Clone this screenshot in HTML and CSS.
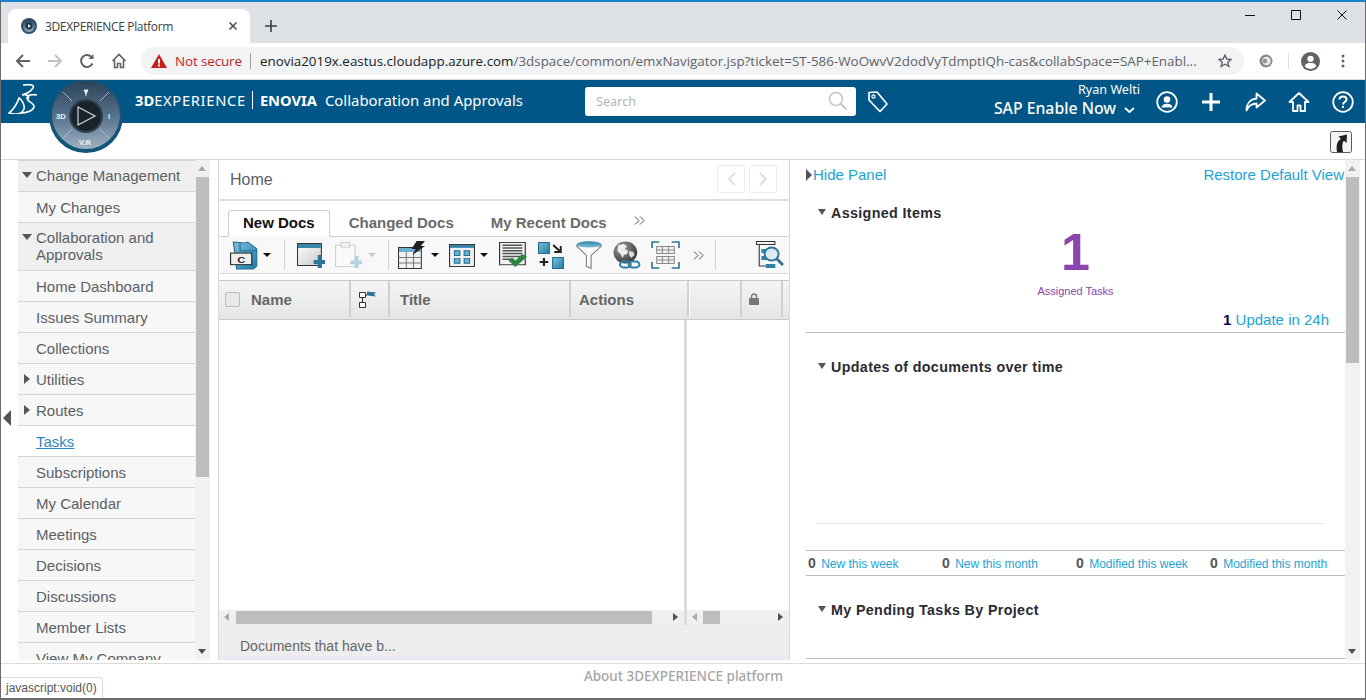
FILE: index.html
```html
<!DOCTYPE html>
<html lang="en">

<head>
    <meta charset="UTF-8">
    <meta name="viewport" content="width=device-width, initial-scale=1.0">
    <title>3DEXPERIENCE Platform</title>
    <link rel="stylesheet" href="styles.css">
</head>

<body>
    <svg class="defs" width="0" height="0">
        <defs>
            <linearGradient id="blue" x1="0" y1="0" x2="1" y2="1">
                <stop offset="0" stop-color="#7fc0dc"/>
                <stop offset="1" stop-color="#1f7ba6"/>
            </linearGradient>
            <linearGradient id="bar" x1="0" y1="0" x2="0" y2="1">
                <stop offset="0" stop-color="#2f83a8"/>
                <stop offset="1" stop-color="#7fc0dc"/>
            </linearGradient>
            <linearGradient id="paper" x1="0" y1="0" x2="1" y2="1">
                <stop offset="0" stop-color="#ffffff"/>
                <stop offset="1" stop-color="#c9c9c9"/>
            </linearGradient>
            <linearGradient id="ring" x1="0" y1="0" x2="0" y2="1">
                <stop offset="0" stop-color="#2b4358"/>
                <stop offset="0.5" stop-color="#54708a"/>
                <stop offset="1" stop-color="#9db2c4"/>
            </linearGradient>
            <radialGradient id="globe" cx="0.35" cy="0.3" r="0.8">
                <stop offset="0" stop-color="#a0a0a0"/>
                <stop offset="1" stop-color="#2e2e2e"/>
            </radialGradient>
        </defs>
    </svg>

    <div class="window">
        <div class="tabstrip">
            <div class="tab">
                <svg class="favicon" width="16" height="16" viewBox="0 0 16 16">
                    <circle cx="8" cy="8" r="8" fill="#2f5069"/>
                    <circle cx="8" cy="8" r="6" fill="url(#ring)"/>
                    <circle cx="8" cy="8" r="3.4" fill="#20303e"/>
                    <path d="M7 6v4l3-2z" fill="#dfe8ef"/>
                </svg>
                <span class="tab-title">3DEXPERIENCE Platform</span>
                <svg class="tab-close" width="10" height="10" viewBox="0 0 10 10">
                    <path d="M1.5 1.5l7 7M8.5 1.5l-7 7" stroke="#45484c" stroke-width="1.5"/>
                </svg>
            </div>
            <svg class="new-tab" width="12" height="12" viewBox="0 0 12 12">
                <path d="M6 0v12M0 6h12" stroke="#3c4043" stroke-width="1.6"/>
            </svg>
            <div class="win-buttons">
                <svg width="10" height="10" viewBox="0 0 10 10"><path d="M0 5.5h10" stroke="#111" stroke-width="1"/></svg>
                <svg width="10" height="10" viewBox="0 0 10 10"><path d="M.5.5h9v9h-9z" fill="none" stroke="#111" stroke-width="1"/></svg>
                <svg width="10" height="10" viewBox="0 0 10 10"><path d="M.5.5l9 9M9.5.5l-9 9" stroke="#111" stroke-width="1"/></svg>
            </div>
        </div>

        <div class="omnibar">
            <svg class="nav-btn" width="16" height="16" viewBox="0 0 16 16"><path d="M15 8H2M8 2L2 8l6 6" fill="none" stroke="#5f6368" stroke-width="2"/></svg>
            <svg class="nav-btn" width="16" height="16" viewBox="0 0 16 16"><path d="M1 8h13M8 2l6 6-6 6" fill="none" stroke="#bdc1c6" stroke-width="2"/></svg>
            <svg class="nav-btn" width="16" height="16" viewBox="0 0 16 16"><path d="M13.5 10.5A6 6 0 1 1 13 4.500" fill="none" stroke="#5f6368" stroke-width="2"/><path d="M14.5 1v5h-5z" fill="#5f6368"/></svg>
            <svg class="nav-btn" width="16" height="16" viewBox="0 0 16 16"><path d="M1.5 8L8 1.5 14.5 8M3.5 7v7.500h3v-4h3v4h3V7" fill="none" stroke="#5f6368" stroke-width="1.6"/></svg>
            <div class="address">
                <svg class="warn" width="16" height="14" viewBox="0 0 16 14"><path d="M8 0l8 14H0z" fill="#c5221f"/><path d="M7 5h2v4.500H7zM7 10.5h2v2H7z" fill="#fff"/></svg>
                <span class="not-secure">Not secure</span>
                <span class="addr-sep"></span>
                <span class="url"><b>enovia2019x.eastus.cloudapp.azure.com</b>/3dspace/common/emxNavigator.jsp?ticket=ST-586-WoOwvV2dodVyTdmptIQh-cas&amp;collabSpace=SAP+Enabl...</span>
                <svg class="star" width="14" height="14" viewBox="0 0 14 14"><path d="M7 1l1.800 4 4.200.4-3.200 2.800 1 4.200L7 10.200 3.200 12.400l1-4.200L1 5.400 5.200 5z" fill="none" stroke="#5f6368" stroke-width="1.4"/></svg>
            </div>
            <svg class="ext" width="14" height="14" viewBox="0 0 14 14"><circle cx="7" cy="7" r="6.5" fill="#8a8a8a"/><circle cx="7.5" cy="7" r="4.2" fill="#e8e8e8"/><circle cx="6" cy="7" r="2.2" fill="#8f8f8f"/></svg>
            <span class="bar-sep"></span>
            <svg class="avatar" width="19" height="19" viewBox="0 0 18 18"><circle cx="9" cy="9" r="9" fill="#5f6368"/><circle cx="9" cy="6.5" r="3" fill="#fff"/><path d="M3.5 13.5c1-2.500 3-3 5.500-3s4.500.5 5.500 3C13 15.500 11 16 9 16s-4-.5-5.500-2.500z" fill="#fff"/></svg>
            <svg class="kebab" width="4" height="14" viewBox="0 0 4 14"><circle cx="2" cy="2" r="1.5" fill="#5f6368"/><circle cx="2" cy="7" r="1.5" fill="#5f6368"/><circle cx="2" cy="12" r="1.5" fill="#5f6368"/></svg>
        </div>

        <div class="appbar">
            <svg class="ds-logo" width="30" height="30" viewBox="0 0 30 30">
                <path d="M15 1C22 0 27 1 25 4C23 7 18 10 14 11C19 10 22 12 20 15" fill="none" stroke="#fff" stroke-width="1.6"/>
                <path d="M11 14C9 20 6 25 1 29C8 31 14 30 16 25C17 21 14 16 11 14z" fill="none" stroke="#fff" stroke-width="1.6"/>
                <path d="M29 11C24 10 19 11 19 14C19 18 27 19 26 23C25 27 18 29 13 29" fill="none" stroke="#fff" stroke-width="1.6"/>
            </svg>
            <div class="app-title">
                <b class="brand-3d">3D</b><span class="brand-exp">EXPERIENCE</span><span class="title-sep"></span><b>ENOVIA</b><span class="app-name">Collaboration and Approvals</span>
            </div>
            <div class="searchbox">
                <span>Search</span>
                <svg width="20" height="20" viewBox="0 0 20 20"><circle cx="8" cy="8" r="6.5" fill="none" stroke="#c4c4c4" stroke-width="1.5"/><path d="M12.5 12.5l6 6" stroke="#c4c4c4" stroke-width="2"/></svg>
            </div>
            <svg class="tag-icon" width="22" height="24" viewBox="0 0 22 24"><path d="M2 2.500l8-.5 10 12-7 7.500L2 10z" fill="none" stroke="#fff" stroke-width="1.7" stroke-linejoin="round"/><circle cx="6.5" cy="6.5" r="1.6" fill="none" stroke="#fff" stroke-width="1.2"/></svg>
            <div class="userbox">
                <div class="user-name">Ryan Welti</div>
                <div class="user-space">SAP Enable Now<svg width="11" height="7" viewBox="0 0 11 7"><path d="M1 1l4.500 4L10 1" fill="none" stroke="#fff" stroke-width="1.8"/></svg></div>
            </div>
            <div class="app-icons">
                <svg width="22" height="22" viewBox="0 0 22 22"><circle cx="11" cy="11" r="9.8" fill="none" stroke="#fff" stroke-width="1.8"/><circle cx="11" cy="8.5" r="3.3" fill="#fff"/><path d="M5.5 16.5c.5-3 3-3.800 5.500-3.800s5 .8 5.500 3.800z" fill="#fff"/></svg>
                <svg width="22" height="22" viewBox="0 0 22 22"><path d="M11 2v18M2 11h18" stroke="#fff" stroke-width="3"/></svg>
                <svg width="22" height="22" viewBox="0 0 22 22"><path d="M12.5 2.500L21 9.500l-8.500 7v-4c-5 0-8 2.500-10 7 0-7 4-11.500 10-12z" fill="none" stroke="#fff" stroke-width="1.8" stroke-linejoin="round"/></svg>
                <svg width="22" height="22" viewBox="0 0 22 22"><path d="M11 2L1.500 11H5v9h4.500v-5.500h3V20H17v-9h3.500z" fill="none" stroke="#fff" stroke-width="1.8" stroke-linejoin="round"/></svg>
                <svg width="22" height="22" viewBox="0 0 22 22"><circle cx="11" cy="11" r="9.8" fill="none" stroke="#fff" stroke-width="1.8"/><path d="M7.5 8.500c0-2 1.500-3 3.500-3s3.500 1 3.500 3c0 2.500-3.500 2.500-3.500 5" fill="none" stroke="#fff" stroke-width="2"/><rect x="10" y="14.8" width="2" height="2.2" fill="#fff"/></svg>
            </div>
            <svg class="compass" width="76" height="73" viewBox="0 0 76 73">
                <circle cx="38" cy="36" r="37" fill="#135479"/>
                <circle cx="38" cy="35" r="34" fill="url(#ring)"/>
                <path d="M15 12l9 9M61 12l-9 9M15 58l9-9M61 58l-9-9" stroke="#b8c8d6" stroke-width=".8"/>
                <circle cx="38" cy="36" r="16" fill="#1a222b" stroke="#33404c" stroke-width="2"/>
                <path d="M30 27v18l17-9z" fill="none" stroke="#c9d6e0" stroke-width="1.2"/>
                <text x="8" y="39" class="compass-text">3D</text>
                <text x="31" y="65" class="compass-text">V.R</text>
                <text x="60" y="39" class="compass-text">i</text>
                <path d="M36 10h4l-2 4zM38 13v3" fill="#e4ecf2" stroke="#e4ecf2" stroke-width="1"/>
            </svg>
        </div>

        <div class="subbar">
            <svg width="22" height="22" viewBox="0 0 22 22"><rect x=".5" y=".5" width="21" height="21" rx="2" fill="#f4f4f4" stroke="#5a5a5a"/><path d="M7 21c-1-7 0-11 4-13L8.500 5.500 17 3.500 16.500 12 14 9.800c-2 2-2 6-1 11.200z" fill="#1d1d1d"/></svg>
        </div>

        <div class="workspace">
            <div class="gutter"><span class="gutter-arrow"></span></div>

            <div class="nav">
                <div class="nav-list">
                    <div class="nav-item head open">Change Management</div>
                    <div class="nav-item">My Changes</div>
                    <div class="nav-item head open">Collaboration and Approvals</div>
                    <div class="nav-item">Home Dashboard</div>
                    <div class="nav-item">Issues Summary</div>
                    <div class="nav-item">Collections</div>
                    <div class="nav-item closed">Utilities</div>
                    <div class="nav-item closed">Routes</div>
                    <div class="nav-item active"><a href="#">Tasks</a></div>
                    <div class="nav-item">Subscriptions</div>
                    <div class="nav-item">My Calendar</div>
                    <div class="nav-item">Meetings</div>
                    <div class="nav-item">Decisions</div>
                    <div class="nav-item">Discussions</div>
                    <div class="nav-item">Member Lists</div>
                    <div class="nav-item">View My Company</div>
                </div>
                <div class="vscroll nav-scroll">
                    <span class="arrow-up"></span>
                    <span class="thumb"></span>
                    <span class="arrow-down"></span>
                </div>
            </div>

            <div class="content">
                <div class="content-head">
                    <span class="home-title">Home</span>
                    <span class="pager">
                        <span class="pager-btn"><svg width="9" height="14" viewBox="0 0 9 14"><path d="M8 1L2 7l6 6" fill="none" stroke="#d8d8d8" stroke-width="1.6"/></svg></span>
                        <span class="pager-btn"><svg width="9" height="14" viewBox="0 0 9 14"><path d="M1 1l6 6-6 6" fill="none" stroke="#d8d8d8" stroke-width="1.6"/></svg></span>
                    </span>
                </div>

                <div class="tabs">
                    <span class="doc-tab current">New Docs</span>
                    <span class="doc-tab">Changed Docs</span>
                    <span class="doc-tab">My Recent Docs</span>
                    <svg class="tabs-more" width="11" height="9" viewBox="0 0 11 9"><path d="M1 .5l4 4-4 4M6 .5l4 4-4 4" fill="none" stroke="#555" stroke-width="1"/></svg>
                </div>

                <div class="toolbar">
                    <svg class="tool t-c" width="29" height="29" viewBox="0 0 26 30" preserveAspectRatio="none">
                        <path d="M3 1l10 1 3-1 8 7v18l-3 3H6z" fill="url(#blue)" stroke="#1f6f96"/>
                        <path d="M9 1v9h15" fill="none" stroke="#1f6f96"/>
                        <rect x=".5" y="12.5" width="19" height="12" fill="#eee" stroke="#222"/>
                        <text x="6.5" y="22.5" class="tool-letter">C</text>
                    </svg>
                    <span class="drop"></span>
                    <span class="tool-sep sep-a"></span>
                    <svg class="tool t-new" width="28" height="25" viewBox="0 0 27 25" preserveAspectRatio="none">
                        <rect x=".5" y=".5" width="23" height="22" fill="url(#paper)" stroke="#333"/>
                        <rect x="1" y="1" width="22" height="4" fill="#3b86a9"/>
                        <path d="M16 17h4v-5h4v5h3v4h-3v4h-4v-4h-4z" fill="#2f7396"/>
                    </svg>
                    <svg class="tool t-paste" width="27" height="26" viewBox="0 0 25 28" preserveAspectRatio="none">
                        <rect x=".5" y="3.5" width="18" height="23" fill="#fafafa" stroke="#cfcfcf"/>
                        <rect x="5.5" y=".5" width="8" height="5" fill="#f2f2f2" stroke="#cfcfcf"/>
                        <path d="M14 20h4v-5h4v5h3v4h-3v4h-4v-4h-4z" fill="#b7d2e0"/>
                    </svg>
                    <span class="drop muted"></span>
                    <span class="tool-sep sep-b"></span>
                    <svg class="tool t-table" width="28" height="28" viewBox="0 0 27 28" preserveAspectRatio="none">
                        <rect x=".5" y="6.5" width="22" height="21" fill="#f2f2f2" stroke="#333"/>
                        <rect x="1" y="7" width="21" height="4" fill="#6db0cf"/>
                        <path d="M.5 16.500h22M.5 22h22M8 11v16M15 11v16" stroke="#777" fill="none"/>
                        <path d="M18 0h8l-4 5h4L14 14l3-6h-4z" fill="#222"/>
                    </svg>
                    <span class="drop"></span>
                    <svg class="tool t-grid" width="26" height="23" viewBox="0 0 24 24" preserveAspectRatio="none">
                        <rect x=".5" y=".5" width="23" height="23" fill="#eef2f4" stroke="#333"/>
                        <rect x="1" y="1" width="22" height="3" fill="#2f83a8"/>
                        <path d="M5 7h5v5H5zM14 7h5v5h-5zM5 15h5v5H5zM14 15h5v5h-5z" fill="#6db0cf" stroke="#1f6f96"/>
                    </svg>
                    <span class="drop"></span>
                    <svg class="tool t-check" width="28" height="26" viewBox="0 0 24 28" preserveAspectRatio="none">
                        <rect x=".5" y=".5" width="22" height="24" fill="#f4f4f4" stroke="#333"/>
                        <path d="M3 3.500h17M3 6.500h17M3 9.500h17M3 12.500h17M3 15.500h17M3 18.500h10" stroke="#555" stroke-width="1.6"/>
                        <path d="M8 20l3-3 3 3 6-7 4 3-10 11z" fill="#2e8540"/>
                    </svg>
                    <svg class="tool t-move" width="26" height="27" viewBox="0 0 24 27" preserveAspectRatio="none">
                        <rect x=".5" y=".5" width="10" height="11" fill="url(#blue)" stroke="#1f6f96"/>
                        <rect x="13.5" y="15.5" width="10" height="11" fill="url(#blue)" stroke="#1f6f96"/>
                        <path d="M14 3l6 6M21 4v6h-6" fill="none" stroke="#222" stroke-width="1.8"/>
                        <path d="M5.5 16v8M1.500 20h8" stroke="#222" stroke-width="2"/>
                    </svg>
                    <svg class="tool t-funnel" width="26" height="28" viewBox="0 0 25 29" preserveAspectRatio="none">
                        <path d="M.5 5L10 15v11l4.500 2.500V15L24.500 5z" fill="#fafafa" stroke="#777"/>
                        <ellipse cx="12.5" cy="3.5" rx="12" ry="3.2" fill="url(#bar)"/>
                    </svg>
                    <svg class="tool t-globe" width="28" height="28" viewBox="0 0 26 28" preserveAspectRatio="none">
                        <circle cx="11.5" cy="11.5" r="11" fill="url(#globe)"/>
                        <path d="M5 4l5-1 3 2-2 3 3 2-1 3-3 1-1 3-2-4-3-3z" fill="#eee"/>
                        <path d="M15 10l4 1 1 3-3 3-2-3z" fill="#ddd"/>
                        <rect x="6.5" y="20.5" width="10" height="6" rx="3" fill="none" stroke="#2f7ea6" stroke-width="1.8"/>
                        <rect x="14.5" y="20.5" width="10" height="6" rx="3" fill="none" stroke="#2f7ea6" stroke-width="1.8"/>
                    </svg>
                    <svg class="tool t-fit" width="29" height="28" viewBox="0 0 28 28" preserveAspectRatio="none">
                        <path d="M1 7V1h7M20 1h7v6M27 21v6h-7M8 27H1v-6" fill="none" stroke="#2f7396" stroke-width="1.6"/>
                        <path d="M5.5 5.500h17v7h-17zM5.500 15.500h17v7h-17zM5.500 9h17M5.500 19h17M11 5.500v7M17 5.500v7M11 15.500v7M17 15.500v7" fill="#f2f2f2" stroke="#8a8a8a"/>
                    </svg>
                    <svg class="tool t-more" width="11" height="9" viewBox="0 0 11 9"><path d="M1 .5l4 4-4 4M6 .5l4 4-4 4" fill="none" stroke="#555" stroke-width="1"/></svg>
                    <span class="tool-sep sep-c"></span>
                    <svg class="tool t-search" width="28" height="28" viewBox="0 0 26 28" preserveAspectRatio="none">
                        <path d="M.5.500h17v3H.5zM3 4v21h6" fill="#f4f4f4" stroke="#333"/>
                        <path d="M5 8h6v4H5zM5 15h6v4H5z" fill="#2f83a8"/>
                        <rect x="9" y="23" width="9" height="4" fill="#2f83a8"/>
                        <circle cx="14.5" cy="13" r="6.5" fill="#dbeaf1" stroke="#2f7396" stroke-width="1.8"/>
                        <path d="M19.5 18l5.500 6" stroke="#2f7396" stroke-width="2.6"/>
                    </svg>
                </div>

                <div class="grid-head">
                    <div class="cell c-name"><span class="checkbox"></span>Name</div>
                    <div class="cell c-flag">
                        <svg width="18" height="17" viewBox="0 0 18 17"><path d="M.5 1.500h6v5h-6zM.5 11.500h6v5h-6zM3.500 6.500v5M6.500 4H8" fill="#fff" stroke="#333"/><path d="M8 .5l9 1-2 2 2 2-9-1z" fill="#2f7396"/></svg>
                    </div>
                    <div class="cell c-title">Title</div>
                    <div class="cell c-actions">Actions</div>
                    <div class="cell c-split"></div>
                    <div class="cell c-blank"></div>
                    <div class="cell c-lock">
                        <svg width="10" height="12" viewBox="0 0 10 12"><path d="M2.500 5V3.500a2.500 2.500 0 0 1 5 0V5" fill="none" stroke="#777" stroke-width="1.5"/><rect y="5" width="10" height="7" rx="1" fill="#777"/></svg>
                    </div>
                    <div class="cell c-end"></div>
                </div>

                <div class="grid-body">
                    <div class="body-left"></div>
                    <div class="body-right"></div>
                </div>

                <div class="grid-scroll">
                    <div class="hscroll left-scroll">
                        <span class="arrow-left"></span>
                        <span class="hthumb wide"></span>
                        <span class="arrow-right"></span>
                    </div>
                    <div class="hscroll right-scroll">
                        <span class="arrow-left"></span>
                        <span class="hthumb narrow"></span>
                        <span class="arrow-right"></span>
                    </div>
                </div>

                <div class="grid-foot">Documents that have b...</div>
                <div class="grid-strip"></div>
            </div>

            <div class="panel">
                <div class="panel-main">
                    <div class="panel-links">
                        <a href="#" class="hide-link">Hide Panel</a>
                        <a href="#">Restore Default View</a>
                    </div>

                    <div class="section assigned">
                        <h3 class="section-title">Assigned Items</h3>
                        <div class="big-number">1</div>
                        <div class="big-label">Assigned Tasks</div>
                        <div class="update-line"><b>1</b> <a href="#">Update in 24h</a></div>
                    </div>

                    <div class="section updates">
                        <h3 class="section-title">Updates of documents over time</h3>
                        <div class="chart-axis"></div>
                    </div>

                    <div class="stats">
                        <span class="stat"><b>0</b> <a href="#">New this week</a></span>
                        <span class="stat"><b>0</b> <a href="#">New this month</a></span>
                        <span class="stat"><b>0</b> <a href="#">Modified this week</a></span>
                        <span class="stat"><b>0</b> <a href="#">Modified this month</a></span>
                    </div>

                    <div class="section pending">
                        <h3 class="section-title">My Pending Tasks By Project</h3>
                    </div>
                </div>
                <div class="vscroll panel-scroll">
                    <span class="arrow-up"></span>
                    <span class="thumb"></span>
                    <span class="arrow-down"></span>
                </div>
            </div>
        </div>

        <div class="footer">
            <span class="about">About 3DEXPERIENCE platform</span>
        </div>

        <div class="status-bubble">javascript:void(0)</div>
    </div>
</body>
</html>
```

FILE: styles.css
```css
* {
    box-sizing: border-box;
}

html, body {
    margin: 0;
    padding: 0;
    height: 100%;
    overflow: hidden;
    background: #fff;
}

.defs {
    position: absolute;
}

.window {
    position: relative;
    width: 1366px;
    height: 700px;
    display: flex;
    flex-direction: column;
    border-top: 2px solid #1a80d0;
    border-left: 1px solid #6b6b6b;
    border-right: 1px solid #6b6b6b;
    border-bottom: 2px solid #6b6b6b;
    font-family: "Liberation Sans", Arial, sans-serif;
    overflow: hidden;
}

/* browser chrome */
.tabstrip {
    height: 41px;
    background: #dee1e6;
    display: flex;
    align-items: flex-end;
    padding-left: 7px;
    flex: none;
}

.tab {
    width: 242px;
    height: 34px;
    background: #fff;
    border-radius: 8px 8px 0 0;
    display: flex;
    align-items: center;
    padding-left: 13px;
    font-family: "Open Sans", sans-serif;
    font-size: 12px;
    color: #3c4043;
}

.tab-title {
    margin-left: 8px;
    width: 133px;
    white-space: nowrap;
    letter-spacing: -0.35px;
}

.tab-close {
    margin-left: 50px;
}

.new-tab {
    margin: 0 0 11px 15px;
}

.win-buttons {
    margin-left: auto;
    align-self: flex-start;
    display: flex;
    gap: 36px;
    padding: 8px 18px 0 0;
}

.omnibar {
    height: 37px;
    background: #fff;
    display: flex;
    align-items: center;
    padding-left: 14px;
    border-bottom: 1px solid #d9dadc;
    flex: none;
}

.nav-btn {
    margin-right: 16px;
    flex: none;
}

.address {
    width: 1103px;
    height: 28px;
    margin-left: -2px;
    background: #f1f3f4;
    border-radius: 14px;
    display: flex;
    align-items: center;
    padding-left: 10px;
    font-family: "Open Sans", sans-serif;
    font-size: 13.4px;
    white-space: nowrap;
    flex: none;
}

.warn {
    flex: none;
}

.not-secure {
    margin-left: 8px;
    color: #c5221f;
    letter-spacing: -0.1px;
}

.addr-sep {
    width: 1px;
    height: 16px;
    background: #9aa0a6;
    margin: 0 9px 0 8px;
}

.url {
    width: 938px;
    overflow: hidden;
    color: #5f6368;
    flex: none;
}

.url b {
    font-weight: 400;
    color: #202124;
}

.star {
    margin-left: 20px;
    flex: none;
}

.ext {
    margin-left: 15px;
    flex: none;
}

.bar-sep {
    width: 1px;
    height: 16px;
    background: #dadce0;
    margin: 0 12px 0 15px;
    flex: none;
}

.avatar {
    flex: none;
}

.kebab {
    margin-left: 21px;
    flex: none;
}

.appbar {
    position: relative;
    height: 43px;
    background: #005686;
    display: flex;
    align-items: center;
    color: #fff;
    font-family: "Noto Sans", sans-serif;
    flex: none;
}

.ds-logo {
    margin: 0 0 6px 7px;
    flex: none;
}

.compass {
    position: absolute;
    left: 47px;
    top: 0;
    z-index: 5;
}

.compass-text {
    font-family: "Liberation Sans", sans-serif;
    font-size: 7.5px;
    font-weight: 700;
    fill: #f2f6f9;
}

.app-title {
    margin: 0 0 3px 97px;
    width: 450px;
    display: flex;
    align-items: center;
    font-size: 14.7px;
    white-space: nowrap;
}

.brand-exp {
    letter-spacing: 0.7px;
}

.title-sep {
    width: 1px;
    height: 18px;
    background: #fff;
    margin: 0 7px 0 6px;
}

.app-name {
    margin-left: 8px;
    font-size: 14.9px;
}

.searchbox {
    width: 271px;
    height: 29px;
    margin-bottom: 1px;
    background: #fff;
    border-radius: 3px;
    display: flex;
    align-items: center;
    justify-content: space-between;
    padding: 0 8px 1px 11px;
    font-size: 12.7px;
    color: #b4b4b4;
    flex: none;
}

.tag-icon {
    margin-left: 11px;
    flex: none;
}

.userbox {
    width: 251px;
    text-align: right;
    line-height: 1;
    margin-bottom: 2px;
    flex: none;
}

.user-name {
    font-size: 12.6px;
    margin-bottom: 4px;
}

.user-space {
    font-size: 15.8px;
    font-weight: 500;
    white-space: nowrap;
    padding-right: 5px;
}

.user-space svg {
    margin-left: 8px;
}

.app-icons {
    margin-left: 16px;
    display: flex;
    gap: 22px;
}

.subbar {
    height: 36px;
    display: flex;
    justify-content: flex-end;
    align-items: center;
    padding: 1px 13px 0 0;
    flex: none;
}

.workspace {
    height: 501px;
    display: flex;
    border-top: 1px solid #d8d8d8;
    overflow: hidden;
    flex: none;
}

.gutter {
    width: 17px;
    display: flex;
    align-items: center;
    padding: 16px 0 0 2px;
    flex: none;
}

.gutter-arrow {
    border-style: solid;
    border-width: 8px 8px 8px 0;
    border-color: transparent #555 transparent transparent;
}

.nav {
    width: 192px;
    display: flex;
    font-size: 15px;
    color: #5b5f66;
    overflow: hidden;
    flex: none;
}

.nav-list {
    width: 177px;
    border-top: 1px solid #d4d4d4;
    flex: none;
}

.nav-item {
    min-height: 31px;
    padding: 7px 6px 6px 18px;
    line-height: 17px;
    background: #f7f7f7;
    border-bottom: 1px solid #d4d4d4;
    position: relative;
}

.nav-item.head {
    padding: 6px 6px 7px 18px;
    background: #efefef;
}

.nav-item.active {
    background: #fff;
}

.nav-item.active a {
    color: #2a86c8;
}

.nav-item.open::before {
    content: "";
    position: absolute;
    left: 4px;
    top: 11px;
    border-style: solid;
    border-width: 6px 5px 0 5px;
    border-color: #55555a transparent transparent transparent;
}

.nav-item.closed::before {
    content: "";
    position: absolute;
    left: 6px;
    top: 10px;
    border-style: solid;
    border-width: 5px 0 5px 6px;
    border-color: transparent transparent transparent #55555a;
}

.vscroll {
    width: 15px;
    background: #f1f1f1;
    position: relative;
    flex: none;
}

.thumb {
    display: block;
    position: absolute;
    left: 1px;
    width: 13px;
    background: #bdbdbd;
}

.nav-scroll .thumb {
    top: 17px;
    height: 300px;
}

.panel-scroll .thumb {
    top: 17px;
    height: 186px;
}

.arrow-up, .arrow-down {
    position: absolute;
    left: 3px;
    border-style: solid;
    border-color: transparent;
}

.arrow-up {
    top: 6px;
    border-width: 0 4.5px 5px 4.5px;
    border-bottom-color: #a8a8a8;
}

.arrow-down {
    bottom: 6px;
    border-width: 5px 4.5px 0 4.5px;
    border-top-color: #505050;
}

/* middle column */
.content {
    width: 572px;
    margin-left: 8px;
    display: flex;
    flex-direction: column;
    border-left: 1px solid #d8d8d8;
    border-right: 1px solid #d8d8d8;
    flex: none;
}

.content-head {
    height: 41px;
    border-bottom: 2px solid #dedede;
    display: flex;
    align-items: center;
    justify-content: space-between;
    padding: 1px 12px 0 11px;
    font-size: 16px;
    color: #5a5f66;
    flex: none;
}

.pager {
    display: flex;
    gap: 4px;
    margin-bottom: 2px;
}

.pager-btn {
    width: 28px;
    height: 28px;
    border: 1px solid #ececec;
    border-radius: 2px;
    display: flex;
    align-items: center;
    justify-content: center;
}

.tabs {
    height: 36px;
    display: flex;
    align-items: flex-end;
    padding-left: 9px;
    border-bottom: 1px solid #cfcfcf;
    font-size: 15px;
    font-weight: 700;
    color: #6a6a6a;
    flex: none;
}

.doc-tab {
    height: 27px;
    padding: 4px 13px 0 13px;
    margin-right: 11px;
    white-space: nowrap;
    margin-bottom: -1px;
}

.doc-tab.current {
    background: #fff;
    color: #111;
    border: 1px solid #cfcfcf;
    border-bottom: 1px solid #fff;
    border-radius: 3px 3px 0 0;
    padding: 3px 14px 0 14px;
    margin-right: 6px;
}

.tabs-more {
    align-self: flex-start;
    margin: 15px 0 0 3px;
}

.toolbar {
    height: 37px;
    display: flex;
    align-items: center;
    background: #f8f8f8;
    border-bottom: 1px solid #dadada;
    padding-left: 11px;
    flex: none;
}

.tool {
    flex: none;
}

.tool-letter {
    font-family: "Liberation Sans", sans-serif;
    font-size: 10px;
    font-weight: 700;
    fill: #222;
}

.drop {
    margin-left: 4px;
    border-style: solid;
    border-width: 4px 4px 0 4px;
    border-color: #111 transparent transparent transparent;
    flex: none;
}

.drop.muted {
    margin-left: 6px;
    border-top-color: #c9c9c9;
}

.t-table + .drop, .t-grid + .drop {
    margin-left: 5px;
}

.tool-sep {
    width: 1px;
    height: 30px;
    background: #d4d4d4;
    flex: none;
}

.sep-a { margin: 0 12px 0 13px; }
.sep-b { margin: 0 9px 0 12px; }
.sep-c { margin: 0 40px 0 11px; }

.t-paste { margin-left: 10px; }
.t-grid { margin-left: 10px; }
.t-check { margin-left: 11px; }
.t-move { margin-left: 11px; }
.t-funnel { margin-left: 12px; }
.t-globe { margin-left: 11px; }
.t-fit { margin-left: 10px; }
.t-more { margin-left: 13px; }

.grid-head {
    height: 40px;
    margin-top: 6px;
    padding-bottom: 2px;
    display: flex;
    background: linear-gradient(#f4f4f4, #e4e6e6);
    border-top: 1px solid #c8c8c8;
    border-bottom: 1px solid #c8c8c8;
    font-size: 15px;
    font-weight: 700;
    color: #666;
    flex: none;
}

.cell {
    display: flex;
    align-items: center;
    border-right: 2px solid #d0d0d0;
    flex: none;
}

.c-name { width: 132px; padding-left: 6px; }
.c-flag { width: 39px; padding-left: 8px; }
.c-title { width: 181px; padding-left: 10px; }
.c-actions { width: 116px; padding-left: 8px; border-right: none; }
.c-split { width: 3px; background: #fff; border-right: none; border-left: 2px solid #d0d0d0; }
.c-blank { width: 52px; }
.c-lock { width: 41px; padding-left: 7px; }
.c-end { width: 6px; border-right: none; }

.checkbox {
    width: 15px;
    height: 15px;
    margin-right: 11px;
    border: 1px solid #bdbdbd;
    border-radius: 2px;
    background: #e8e8e8;
}

.grid-body {
    height: 290px;
    display: flex;
    flex: none;
}

.body-left {
    width: 468px;
    border-right: 3px solid #dcdcdc;
}

.grid-scroll {
    height: 15px;
    display: flex;
    background: #f0f0f0;
    flex: none;
}

.hscroll {
    position: relative;
}

.left-scroll {
    width: 468px;
    border-right: 3px solid #dcdcdc;
}

.right-scroll {
    flex: 1;
}

.hthumb {
    position: absolute;
    top: 1px;
    height: 13px;
    background: #bdbdbd;
}

.hthumb.wide {
    left: 17px;
    width: 416px;
}

.hthumb.narrow {
    left: 16px;
    width: 17px;
}

.arrow-left, .arrow-right {
    position: absolute;
    top: 3px;
    border-style: solid;
    border-color: transparent;
}

.arrow-left {
    left: 5px;
    border-width: 4.5px 5px 4.5px 0;
    border-right-color: #a8a8a8;
}

.arrow-right {
    right: 6px;
    border-width: 4.5px 0 4.5px 5px;
    border-left-color: #505050;
}

.grid-foot {
    height: 31px;
    background: #eeeeee;
    padding: 13px 0 0 21px;
    font-size: 14px;
    line-height: 17px;
    color: #666;
    flex: none;
}

.grid-strip {
    flex: 1;
    background: #e8eaf2;
}

/* right panel */
.panel {
    flex: 1;
    display: flex;
    min-width: 0;
}

.panel-main {
    width: 555px;
    padding-left: 16px;
    flex: none;
}

.panel-links {
    height: 23px;
    margin-bottom: 1px;
    display: flex;
    justify-content: space-between;
    align-items: flex-end;
    font-size: 15px;
    line-height: 17px;
    white-space: nowrap;
    padding-right: 1px;
}

.panel-links a, .update-line a, .stat a {
    color: #1ba3d4;
    text-decoration: none;
}

.hide-link {
    position: relative;
    padding-left: 7px;
}

.hide-link::before {
    content: "";
    position: absolute;
    left: 0;
    top: 3px;
    border-style: solid;
    border-width: 6px 0 6px 6px;
    border-color: transparent transparent transparent #55555a;
}

.section {
    border-bottom: 1px solid #bdbdbd;
}

.section-title {
    position: relative;
    margin: 0;
    padding-left: 25px;
    font-size: 14.3px;
    line-height: 17px;
    font-weight: 700;
    letter-spacing: 0.35px;
    color: #2b2b33;
}

.section-title::before {
    content: "";
    position: absolute;
    left: 12px;
    top: 4px;
    border-style: solid;
    border-width: 6px 4.5px 0 4.5px;
    border-color: #55555f transparent transparent transparent;
}

.assigned {
    height: 149px;
    padding-top: 21px;
}

.big-number {
    margin-top: 6px;
    height: 49px;
    text-align: center;
    font-size: 52px;
    line-height: 49px;
    font-weight: 700;
    color: #8e44ad;
}

.big-label {
    margin-top: 8px;
    text-align: center;
    font-size: 11px;
    line-height: 13px;
    color: #8e44ad;
}

.update-line {
    margin-top: 13px;
    padding-right: 16px;
    text-align: right;
    font-size: 15px;
    line-height: 17px;
}

.update-line b {
    color: #0a0a50;
}

.updates {
    height: 218px;
    padding-top: 26px;
}

.chart-axis {
    margin: 147px 22px 0 11px;
    height: 1px;
    background: #dbe1ea;
}

.stats {
    height: 25px;
    display: grid;
    grid-template-columns: repeat(4, 134px);
    align-items: center;
    padding-left: 2px;
    border-bottom: 1px solid #bdbdbd;
    font-size: 12px;
    white-space: nowrap;
}

.stat b {
    font-size: 14px;
    color: #555;
    margin-right: 2px;
}

.pending {
    height: 83px;
    padding-top: 26px;
}

.footer {
    flex: 1;
    border-top: 1px solid #dcdcdc;
    margin-top: 3px;
    text-align: right;
    padding: 3px 582px 0 0;
    font-family: "Noto Sans", sans-serif;
    font-size: 13.5px;
    font-weight: 500;
    color: #a5a5a5;
}

.status-bubble {
    position: absolute;
    left: 0;
    bottom: 0;
    height: 21px;
    padding: 3px 5px 0 5px;
    background: #fff;
    border: 1px solid #dcdcdc;
    border-left: none;
    border-bottom: none;
    border-radius: 0 4px 0 0;
    font-size: 12px;
    color: #555;
}
```
